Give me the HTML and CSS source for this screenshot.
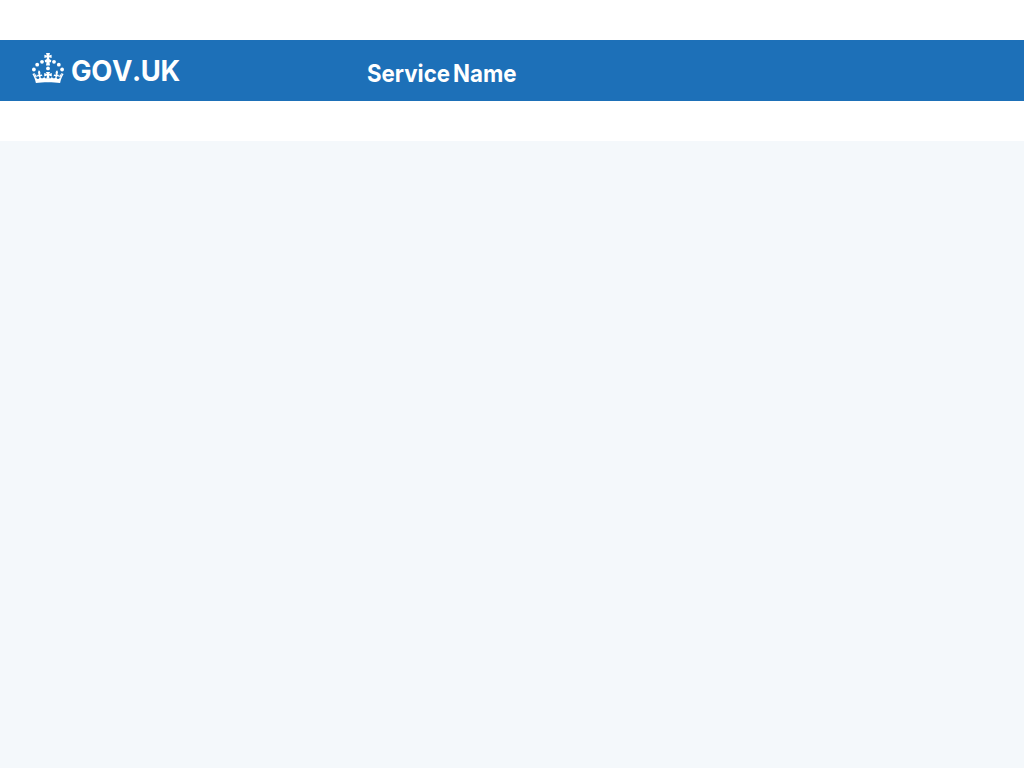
FILE: index.html
```html
<!DOCTYPE html>
<html lang="en">
<head>
<meta charset="utf-8">
<title>Service Name – GOV.UK</title>
<link rel="stylesheet" href="styles.css">
</head>
<body>
<div class="page-top">
<header class="header">
<a class="header-logo" href="#" aria-label="GOV.UK">
<svg class="crown" viewBox="0 0 32 30" width="32" height="30" fill="currentColor" aria-hidden="true">
<defs>
<g id="crown-half">
<circle cx="22" cy="8.8" r="1.9"/>
<circle cx="26.8" cy="11.7" r="1.9"/>
<circle cx="30.1" cy="16.5" r="1.9"/>
<path d="M15.9 0H18L17.2 2.5 19.6 1.7V5.1L17.2 4.3V5.9L19.3 7.2 18.9 9.2 17.5 9.2 18 12.6H15.9Z"/>
<path d="M15.9 29.2C20.5 29.2 24.6 29.4 28.1 30 29 26 30 23.8 31.6 21L29.2 20.1Q29.4 21.8 29.2 22.8L28.1 20.8 27 24.4 28.8 23.6C28 25.6 26.8 26.3 25.7 26 24.5 25.7 24.3 24.3 25.1 23.6 25.7 23.1 26.4 23.2 26.7 23.9 27.4 22 26 21.2 24.9 21.8 26.3 20.4 26.3 19 25.1 17.3 23.3 18.7 23.3 20.1 24.1 21.9 22.8 21 21.3 21.6 21.8 23.4 22.4 22.5 23.6 22.9 23.5 23.9 23.5 24.8 22.7 25.4 21.6 25.3 20.7 25.2 20.1 24.6 19.9 23.7L18.9 25.2H15.9Z"/>
<path d="M15.9 19.1H18.1L17.1 21 19.8 20.1V23.4L17 22.4 17.5 25.5H15.9Z"/>
</g>
</defs>
<use href="#crown-half"/>
<use href="#crown-half" transform="matrix(-1 0 0 1 32 0)"/>
<circle cx="16" cy="15.4" r="1.9"/>
</svg>
<span class="wordmark">GOV.UK</span>
</a>
<a class="service" href="#">Service Name</a>
</header>
</div>
</body>
</html>
```
FILE: styles.css
```css
body { margin: 0; background: #f4f8fb; font-family: Inter, sans-serif; }
.page-top { background: #fff; padding: 40px 0; }
.header { display: flex; height: 61px; background: #1d70b8; color: #fff; }
.header a { color: inherit; text-decoration: none; }
.header-logo { display: flex; width: 335px; padding-left: 32px; }
.crown { margin-top: 13px; flex: none; }
.wordmark { margin: 12px 0 0 7px; font-weight: 700; font-size: 29px; line-height: 37px; font-kerning: none; letter-spacing: -.4px; transform: scaleX(.945); transform-origin: left; }
.service { font-weight: 700; font-size: 24px; line-height: 30px; word-spacing: -2.5px; margin-top: 19px; transform: scaleX(.928); transform-origin: left; }
```
